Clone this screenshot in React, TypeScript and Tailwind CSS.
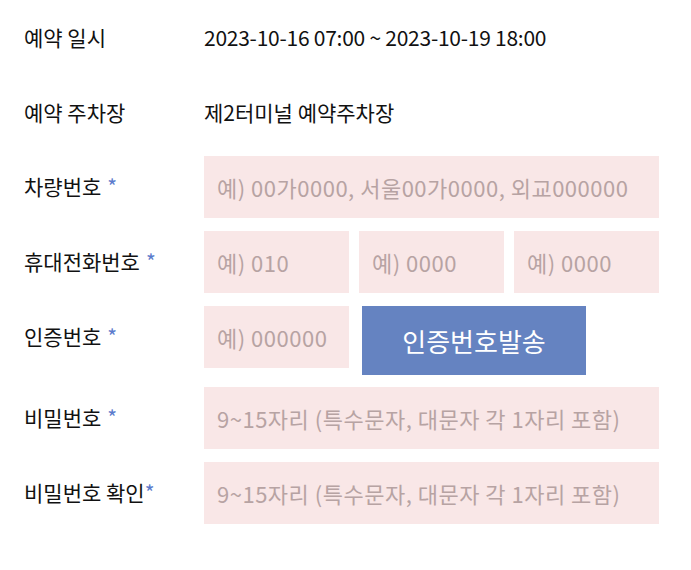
import React from 'react';

const FONT = { fontFamily: '"Noto Sans CJK KR", "Noto Sans", sans-serif' };

// Label shown in the left column, with an optional required mark.
function Label({ text, required, tight }: { text: string; required?: boolean; tight?: boolean }) {
  return (
    <div className="w-[180px] shrink-0 text-[21px] text-[#111]">
      {text}
      {required && <span className={`text-[#5b7bcc] ${tight ? '' : 'ml-[6px]'}`}>*</span>}
    </div>
  );
}

function Field({ placeholder, className = '' }: { placeholder: string; className?: string }) {
  return (
    <input
      placeholder={placeholder}
      style={FONT}
      className={`h-[62px] bg-[#f9e7e7] px-[13px] text-[22px] tracking-[0.5px] text-[#333] outline-none placeholder:text-[#b7a3a3] ${className}`}
    />
  );
}

export default function App() {
  return (
    <div style={FONT} className="min-h-[570px] bg-white px-[24px] pt-[6px]">
      <div className="flex flex-col gap-[13px]">
        <div className="flex h-[62px] items-center pt-[2px]">
          <Label text="예약 일시" />
          <div className="text-[21px] tracking-[-0.25px] text-[#111]">2023-10-16 07:00 ~ 2023-10-19 18:00</div>
        </div>
        <div className="flex h-[62px] items-center pt-[2px]">
          <Label text="예약 주차장" />
          <div className="text-[21px] text-[#111]">제2터미널 예약주차장</div>
        </div>
        <div className="flex items-center">
          <Label text="차량번호" required />
          <Field placeholder="예) 00가0000, 서울00가0000, 외교000000" className="w-[455px]" />
        </div>
        <div className="flex items-center">
          <Label text="휴대전화번호" required />
          <div className="flex w-[455px] gap-[10px]">
            <Field placeholder="예) 010" className="w-[145px] min-w-0" />
            <Field placeholder="예) 0000" className="w-[145px] min-w-0" />
            <Field placeholder="예) 0000" className="w-[145px] min-w-0" />
          </div>
        </div>
        <div className="flex items-start">
          <div className="flex h-[62px] items-center">
            <Label text="인증번호" required />
          </div>
          <Field placeholder="예) 000000" className="w-[145px]" />
          <button
            type="button"
            className="ml-[13px] h-[69px] w-[224px] bg-[#6583c1] text-[26px] text-white"
          >
            인증번호발송
          </button>
        </div>
        <div className="-mt-[1px] flex items-center">
          <Label text="비밀번호" required />
          <Field placeholder="9~15자리 (특수문자, 대문자 각 1자리 포함)" className="w-[455px]" />
        </div>
        <div className="flex items-center">
          <Label text="비밀번호 확인" required tight />
          <Field placeholder="9~15자리 (특수문자, 대문자 각 1자리 포함)" className="w-[455px]" />
        </div>
      </div>
    </div>
  );
}
